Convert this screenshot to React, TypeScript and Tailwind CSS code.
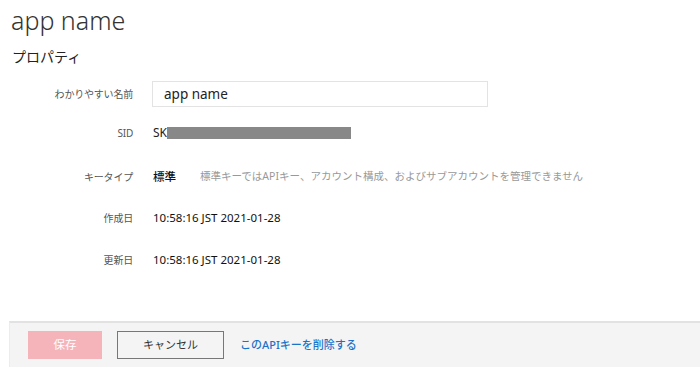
import React from "react";

const font = { fontFamily: '"Noto Sans", "Open Sans", "Noto Sans CJK JP", sans-serif' };

function Row({ label, children, className = "" }: { label: string; children: React.ReactNode; className?: string }) {
  return (
    <div className={`flex items-center ${className}`}>
      <div className="w-[133px] shrink-0 text-right text-[10px] tracking-[-0.2px] text-[#555]">{label}</div>
      <div className="ml-[20px] flex items-center">{children}</div>
    </div>
  );
}

export default function App() {
  return (
    <div className="w-[700px] h-[381px] bg-white overflow-hidden text-[#222]" style={font}>
      <div className="pl-[11px] pt-[3px] h-[36px] text-[25px] font-light leading-[34px] text-[#333]">app name</div>
      <div className="pl-[12px] mt-[10px] h-[22px] text-[14px] leading-[22px] text-[#222]">プロパティ</div>
      <div className="mt-[13px]">
        <Row label="わかりやすい名前" className="h-[26px]">
          <div className="-ml-[1px] w-[336px] h-[26px] border border-[#e3e3e3] bg-white flex items-center pl-[11px] text-[13.5px] text-[#222]">
            app name
          </div>
        </Row>
        <Row label="SID" className="mt-[16px] h-[20px]">
          <span className="text-[12px] text-[#222]">SK</span>
          <span className="inline-block w-[184px] h-[12px] bg-[#888]" />
        </Row>
        <Row label="キータイプ" className="mt-[24px] h-[20px]">
          <span className="text-[11.5px] font-medium text-[#111]">標準</span>
          <span className="ml-[24px] text-[10.5px] text-[#999]">標準キーではAPIキー、アカウント構成、およびサブアカウントを管理できません</span>
        </Row>
        <Row label="作成日" className="mt-[21px] h-[20px]">
          <span className="text-[11.5px] text-[#111]">10:58:16 JST 2021-01-28</span>
        </Row>
        <Row label="更新日" className="mt-[22px] h-[20px]">
          <span className="text-[11.5px] text-[#111]">10:58:16 JST 2021-01-28</span>
        </Row>
      </div>
      <div className="ml-[9px] mt-[51px] h-[46px] bg-[#f4f4f4] border-t-2 border-l border-t-[#e2e2e2] border-l-[#ececec] flex items-center pl-[18px]">
        <button className="w-[74px] h-[28px] bg-[#f5b4ba] text-white text-[11.5px]">保存</button>
        <button className="ml-[15px] w-[107px] h-[28px] border border-[#777] bg-[#f4f4f4] text-[11px] text-[#333]">キャンセル</button>
        <a className="ml-[16px] text-[11px] font-medium text-[#1a73c8]">このAPIキーを削除する</a>
      </div>
    </div>
  );
}
